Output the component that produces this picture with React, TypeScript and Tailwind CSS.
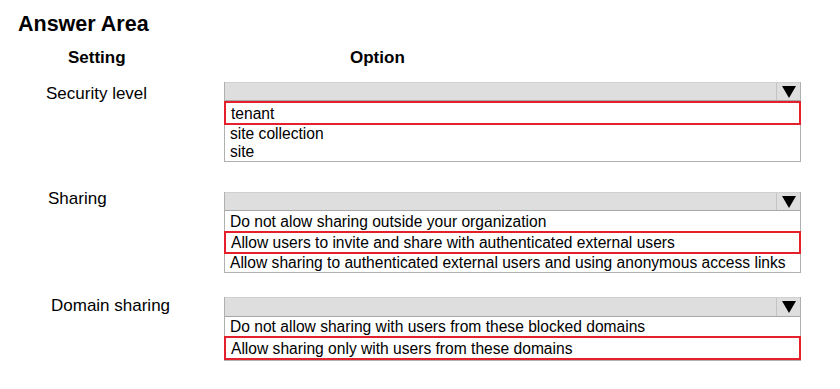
import React from "react";

type Item = { text: string; hl?: boolean; cls?: string };

function Arrow() {
  return (
    <svg width="14" height="12" viewBox="0 0 14 12" className="block">
      <polygon points="0,0 14,0 7,12" fill="#000" />
    </svg>
  );
}

function Dropdown({ items, headerH }: { items: Item[]; headerH: string }) {
  return (
    <div className="w-[577px] border-x border-b border-[#b0b0b0] bg-white">
      <div className={`flex ${headerH} bg-[#dedede] border-t border-[#d0d0d0] border-b border-b-[#a8a8a8]`}>
        <div className="flex-1" />
        <div className="w-[24px] border-l border-[#c4c4c4] flex items-center justify-center">
          <Arrow />
        </div>
      </div>
      <div className="flex flex-col">
        {items.map((it, i) =>
          it.hl ? (
            <div
              key={i}
              className={`-mx-px border-2 border-[#e3202b] pl-[5px] text-[15.6px] leading-[19px] whitespace-nowrap ${it.cls ?? ""}`}
            >
              {it.text}
            </div>
          ) : (
            <div
              key={i}
              className={`pl-[5px] text-[15.6px] leading-[18px] whitespace-nowrap ${it.cls ?? ""}`}
            >
              {it.text}
            </div>
          )
        )}
      </div>
    </div>
  );
}

export default function App() {
  return (
    <div className="w-[840px] h-[389px] bg-white text-black overflow-hidden font-['Liberation_Sans',Arial,sans-serif]">
      <h1 className="pl-[18px] pt-[12px] text-[21.5px] leading-[24px] font-bold">Answer Area</h1>
      <div className="flex mt-[12px] text-[17px] leading-[20px] font-bold">
        <div className="w-[350px] pl-[68px]">Setting</div>
        <div>Option</div>
      </div>

      <div className="flex mt-[14px]">
        <div className="w-[224px] pl-[46px] pt-[2px] text-[17px] leading-[20px]">Security level</div>
        <Dropdown
          headerH="h-[19px]"
          items={[
            { text: "tenant", hl: true, cls: "pt-px" },
            { text: "site collection" },
            { text: "site" },
          ]}
        />
      </div>

      <div className="flex mt-[30px]">
        <div className="w-[224px] pl-[48px] -mt-[3px] text-[17px] leading-[20px]">Sharing</div>
        <Dropdown
          headerH="h-[19px]"
          items={[
            { text: "Do not alow sharing outside your organization", cls: "h-[20px] pt-[2px] overflow-hidden" },
            { text: "Allow users to invite and share with authenticated external users", hl: true },
            { text: "Allow sharing to authenticated external users and using anonymous access links", cls: "leading-[17px]" },
          ]}
        />
      </div>

      <div className="flex mt-[24px]">
        <div className="w-[224px] pl-[51px] -mt-[1px] text-[17px] leading-[20px]">Domain sharing</div>
        <Dropdown
          headerH="h-[20px]"
          items={[
            { text: "Do not allow sharing with users from these blocked domains", cls: "h-[19px] pt-[1px] overflow-hidden" },
            { text: "Allow sharing only with users from these domains", hl: true, cls: "pt-px" },
          ]}
        />
      </div>
    </div>
  );
}
